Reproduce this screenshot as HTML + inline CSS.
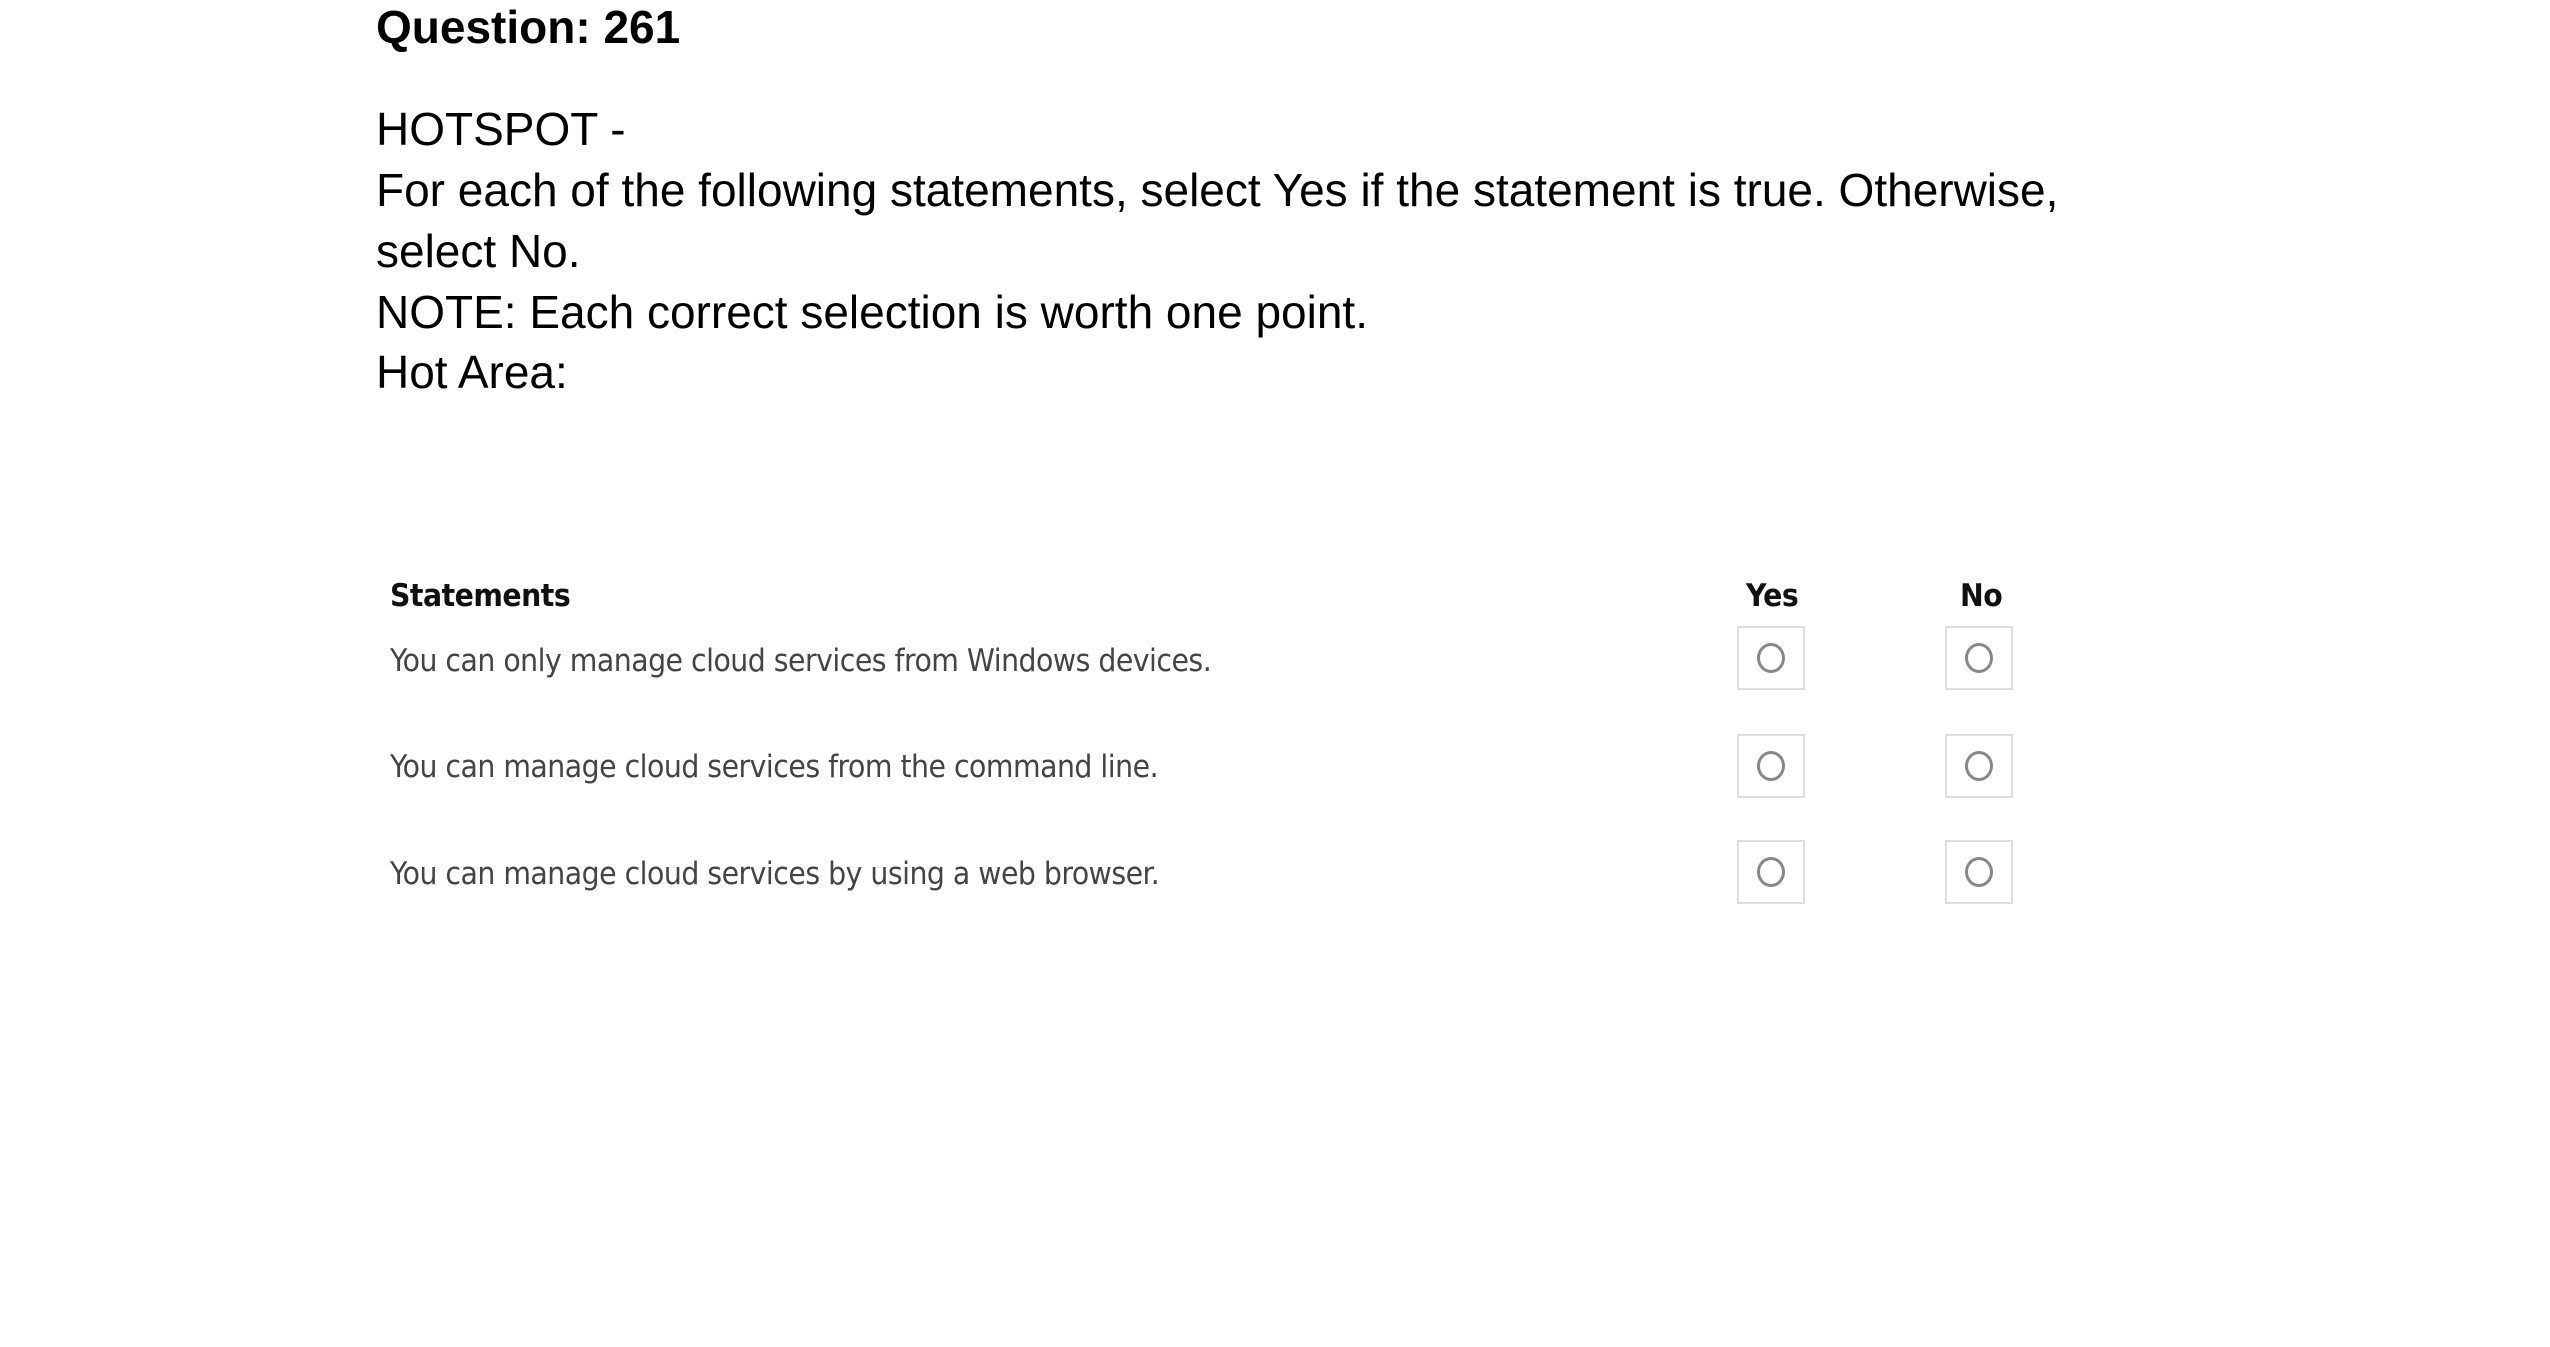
<!DOCTYPE html>
<html><head><meta charset="utf-8"><style>
body{margin:0;width:2550px;height:1347px;background:#fff;position:relative;overflow:hidden;font-family:"Liberation Sans",sans-serif;}
.t{position:absolute;left:376px;white-space:nowrap;color:#000;font-size:46px;line-height:1;}
.s{position:absolute;white-space:nowrap;font-family:"DejaVu Sans Condensed","Liberation Sans",sans-serif;font-size:31.5px;color:#444;letter-spacing:-0.5px;}
.b{font-weight:bold;color:#111;}
.box{position:absolute;width:68px;height:64px;border:2px solid #ddd;box-sizing:border-box;}
.box::after{content:"";position:absolute;left:50%;top:50%;width:28px;height:30px;margin:-15px 0 0 -14px;border:3px solid #888;border-radius:50%;box-sizing:border-box;}
</style></head><body>
<div class="t" style="top:4px;font-weight:bold;">Question: 261</div>
<div class="t" style="top:106px;">HOTSPOT -</div>
<div class="t" style="top:167px;">For each of the following statements, select Yes if the statement is true. Otherwise,</div>
<div class="t" style="top:228px;">select No.</div>
<div class="t" style="top:289px;">NOTE: Each correct selection is worth one point.</div>
<div class="t" style="top:349px;">Hot Area:</div>

<div class="s b" style="left:390px;top:578px;">Statements</div>
<div class="s b" style="left:1746px;top:578px;">Yes</div>
<div class="s b" style="left:1960px;top:578px;">No</div>

<div class="s" style="left:390px;top:643px;">You can only manage cloud services from Windows devices.</div>
<div class="s" style="left:390px;top:749px;">You can manage cloud services from the command line.</div>
<div class="s" style="left:390px;top:856px;">You can manage cloud services by using a web browser.</div>

<div class="box" style="left:1737px;top:626px;"></div>
<div class="box" style="left:1945px;top:626px;"></div>
<div class="box" style="left:1737px;top:734px;"></div>
<div class="box" style="left:1945px;top:734px;"></div>
<div class="box" style="left:1737px;top:840px;"></div>
<div class="box" style="left:1945px;top:840px;"></div>
</body></html>
